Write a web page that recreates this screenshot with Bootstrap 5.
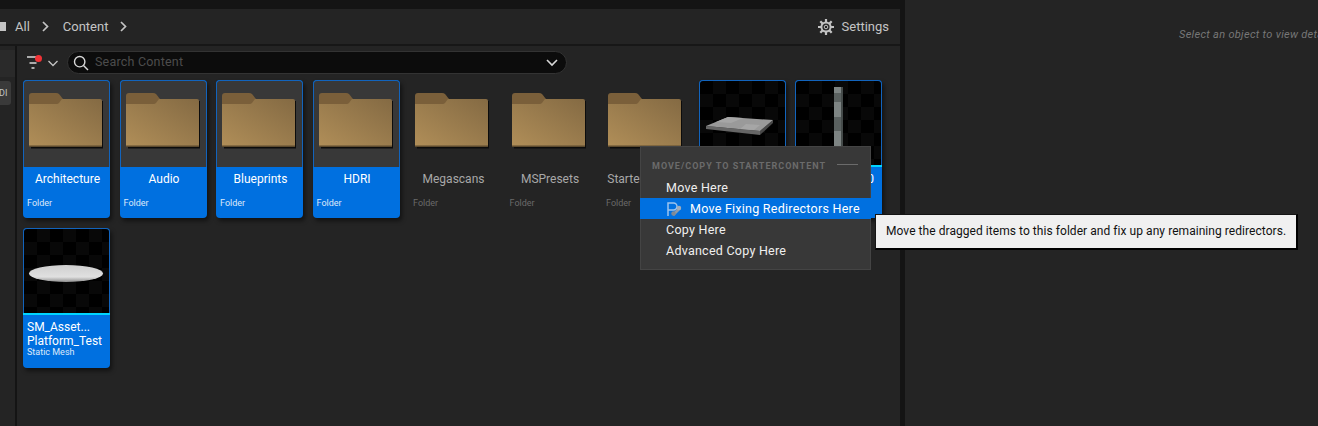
<!DOCTYPE html>
<html lang="en">
<head>
    <meta charset="UTF-8">
    <title>Content Browser</title>
    <link href="https://cdn.jsdelivr.net/npm/bootstrap@5.3.0/dist/css/bootstrap.min.css" rel="stylesheet">
    <style>
        html, body { height: 100%; }
        body {
            background-color: #141414;
            font-family: Roboto, "Liberation Sans", sans-serif;
            overflow: hidden;
            position: relative;
        }
        .browser-panel { width: 900px; height: 426px; padding-top: 9px; }
        .details-panel {
            width: 413px;
            height: 426px;
            margin-left: 5px;
            background-color: #242424;
            padding: 27px 0 0 274px;
            font-size: 11px;
            font-style: italic;
            letter-spacing: .3px;
            color: #777;
            white-space: nowrap;
            overflow: hidden;
        }
        .crumb-bar {
            height: 35px;
            background-color: #242424;
            color: #c4c4c4;
            font-size: 13px;
        }
        .crumb-stub { width: 6px; height: 9px; background-color: #c4c4c4; margin-right: 9px; }
        .crumb-sep { margin: 0 13px 0 12px; }
        .crumb-word { padding-left: 1px; }
        .settings-btn { padding-right: 11px; }
        .body-row { height: 382px; border-top: 2px solid #171717; }
        .side-strip { width: 15px; background-color: #242424; overflow: hidden; }
        .side-top { height: 27px; margin-top: 4px; background-color: #2a2a2a; }
        .side-chip {
            margin-top: 4px;
            width: 11px;
            height: 24px;
            border-radius: 0 3px 3px 0;
            background-color: #3a3a3a;
            color: #c4c4c4;
            font-size: 9px;
            line-height: 24px;
            text-indent: -1px;
            overflow: hidden;
        }
        .main-pane { width: 883px; margin-left: 2px; background-color: #242424; }
        .filter-row { height: 34px; padding: 5px 0 0 9px; }
        .filter-btn { width: 41px; position: relative; }
        .filter-icon { margin: 5px 0 0 1px; }
        .filter-caret { margin: 9px 0 0 9px; }
        .filter-dot {
            position: absolute;
            left: 9px;
            top: 4px;
            width: 7px;
            height: 7px;
            border-radius: 50%;
            background-color: #f03236;
        }
        .search-pill {
            width: 500px;
            height: 23px;
            background-color: #0c0c0c;
            border: 1px solid #333;
            border-radius: 12px;
            padding: 0 8px 0 5px;
        }
        .search-field {
            background: transparent;
            border: 0;
            outline: 0;
            padding: 0;
            margin-left: 6px;
            width: 440px;
            font-size: 12.5px;
            letter-spacing: .2px;
            color: #ccc;
        }
        .search-field::placeholder { color: #4c4c4c; opacity: 1; }
        .tile-grid {
            display: grid;
            grid-template-columns: repeat(9, 87px);
            gap: 10px 9.5px;
            padding-left: 6px;
        }
        .asset-tile {
            height: 138px;
            border-radius: 4px;
            color: #a8a8a8;
            overflow: hidden;
        }
        .asset-tile.tall-tile { height: 140px; }
        .asset-tile.is-selected {
            background-color: #0070e0;
            color: #fff;
            box-shadow: 2px 3px 4px rgba(0, 0, 0, .5);
        }
        .tile-thumb {
            height: 87px;
            background-color: #383838;
            border: 1px solid #1264bd;
            border-bottom: 0;
            border-radius: 4px 4px 0 0;
            padding: 12px 0 0 5px;
        }
        .asset-tile:not(.is-selected) .tile-thumb { background-color: transparent; border-color: transparent; }
        .tile-thumb.mesh-thumb {
            height: 85px;
            padding: 0;
            background-color: #000;
            background-image: conic-gradient(#080808 25%, #000 0 50%, #080808 0 75%, #000 0);
            background-size: 26px 26px;
        }
        .type-bar { height: 2px; background-color: #00d5ff; }
        .tile-name {
            font-size: 12px;
            line-height: 14px;
            text-align: center;
            padding: 5px 0 0 2px;
            height: 24px;
            white-space: nowrap;
        }
        .tile-type { font-size: 9px; line-height: 11px; padding: 7px 0 0 4px; opacity: .85; }
        .tile-type.dim { color: #777; }
        .tile-name.name-left { text-align: left; padding: 5px 0 0 4px; height: auto; }
        .tile-type.type-tight { padding-top: 0; margin-top: -1px; }
        .context-menu {
            position: absolute;
            left: 640px;
            top: 146px;
            width: 231px;
            height: 124px;
            background-color: #383838;
            border: 1px solid #444;
            color: #efefef;
            font-size: 12.5px;
            letter-spacing: .25px;
        }
        .menu-head {
            height: 30px;
            padding: 13px 12px 0 11px;
            font-size: 9px;
            line-height: 12px;
            font-weight: 700;
            letter-spacing: 1px;
            color: #6b6b6b;
            text-transform: uppercase;
        }
        .menu-rule { width: 21px; height: 1px; background-color: #6b6b6b; }
        .menu-row { height: 21px; line-height: 21px; padding-left: 25px; }
        .menu-row.is-hot { background-color: #0070e0; color: #fff; margin: 0 -1px; padding-left: 26px; }
        .hot-icon { margin-right: 7px; }
        .hint-box {
            position: absolute;
            left: 875px;
            top: 214px;
            width: 423px;
            height: 36px;
            background-color: #f0f0f0;
            border: 1px solid #141414;
            border-right: 2px solid #000;
            border-bottom: 2px solid #000;
            color: #111;
            font-size: 12px;
            letter-spacing: .055px;
            line-height: 33px;
            padding-left: 10px;
            white-space: nowrap;
        }
    </style>
</head>
<body>
    <div class="d-flex">
        <div class="browser-panel">
            <div class="crumb-bar d-flex align-items-center">
                <span class="crumb-stub"></span>
                <span>All</span>
                <svg class="crumb-sep" width="7" height="11" viewBox="0 0 7 11" fill="none" stroke="#c4c4c4" stroke-width="1.7"><path d="M1 1l4.500 4.500L1 10"/></svg>
                <span class="crumb-word">Content</span>
                <svg class="crumb-sep" width="7" height="11" viewBox="0 0 7 11" fill="none" stroke="#c4c4c4" stroke-width="1.7"><path d="M1 1l4.500 4.500L1 10"/></svg>
                <div class="ms-auto d-flex align-items-center gap-2 settings-btn">
                    <svg width="16" height="16" viewBox="0 0 16 16" fill="none" stroke="#c4c4c4">
                        <circle cx="8" cy="8" r="4.600" stroke-width="2"/>
                        <circle cx="8" cy="8" r="1.800" stroke-width="1"/>
                        <path stroke-width="2.200" d="M8 0v3M8 13v3M0 8h3M13 8h3M2.300 2.300l2.100 2.100M11.600 11.600l2.100 2.100M2.300 13.700l2.100-2.100M11.600 4.400l2.100-2.100"/>
                    </svg>
                    <span>Settings</span>
                </div>
            </div>
            <div class="body-row d-flex">
                <div class="side-strip">
                    <div class="side-top"></div>
                    <div class="side-chip">DI</div>
                </div>
                <div class="main-pane">
                    <div class="filter-row d-flex">
                        <div class="filter-btn d-flex align-items-start">
                            <svg class="filter-icon" width="12" height="14" viewBox="0 0 12 14" stroke="#d8d8d8" stroke-width="1.500"><path d="M0 1h12M2.500 7h7M4.500 12h3"/></svg>
                            <svg class="filter-caret" width="10" height="7" viewBox="0 0 10 7" fill="none" stroke="#c4c4c4" stroke-width="1.300"><path d="M.5 1l4.500 4.500L9.500 1"/></svg>
                            <span class="filter-dot"></span>
                        </div>
                        <div class="search-pill d-flex align-items-center">
                            <svg width="16" height="16" viewBox="0 0 16 16" fill="none" stroke="#d8d8d8" stroke-width="1.400"><circle cx="6.700" cy="6.700" r="5.200"/><path d="M10.500 10.500L15 15"/></svg>
                            <input class="search-field" type="text" placeholder="Search Content">
                            <svg class="ms-auto" width="12" height="8" viewBox="0 0 12 8" fill="none" stroke="#d8d8d8" stroke-width="1.600"><path d="M1 1l5 5 5-5"/></svg>
                        </div>
                    </div>
                    <div class="tile-grid" id="tiles"></div>
                </div>
            </div>
        </div>
        <div class="details-panel">Select an object to view details.</div>
    </div>

    <div class="context-menu">
        <div class="menu-head d-flex align-items-start justify-content-between">
            <span>Move/Copy to StarterContent</span>
            <span class="menu-rule mt-1"></span>
        </div>
        <div class="menu-row">Move Here</div>
        <div class="menu-row is-hot d-flex align-items-center">
            <svg class="hot-icon" width="17" height="16" viewBox="0 0 17 16">
                <path d="M2 15V2h5.500a3.500 3.500 0 0 1 0 7H2" fill="none" stroke="#9cc4ee" stroke-width="1.500"/>
                <path d="M6 13l7-7 2 2-7 7z" fill="#8e9aa8"/>
                <circle cx="7.500" cy="12.500" r="2.200" fill="#7f8a96"/>
                <circle cx="13" cy="7" r="2.200" fill="#a3adb8"/>
            </svg>
            <span>Move Fixing Redirectors Here</span>
        </div>
        <div class="menu-row">Copy Here</div>
        <div class="menu-row">Advanced Copy Here</div>
    </div>
    <div class="hint-box">Move the dragged items to this folder and fix up any remaining redirectors.</div>

    <script>
        const assets = [
            { name: "Architecture", kind: "folder", selected: true },
            { name: "Audio", kind: "folder", selected: true },
            { name: "Blueprints", kind: "folder", selected: true },
            { name: "HDRI", kind: "folder", selected: true },
            { name: "Megascans", kind: "folder" },
            { name: "MSPresets", kind: "folder" },
            { name: "StarterContent", kind: "folder" },
            { name: "SM_Plane_00", kind: "plate", selected: true },
            { name: "SM_Pillar_00", kind: "column", selected: true },
            { name: "SM_Asset...", name2: "Platform_Test", kind: "disc", selected: true }
        ];

        const folderIcon = (id) => `
            <svg width="75" height="56" viewBox="0 0 75 56">
                <defs><linearGradient id="${id}" x1="0" y1="1" x2="1" y2="0">
                    <stop offset="0" stop-color="#b08e58"/><stop offset="1" stop-color="#846a43"/>
                </linearGradient></defs>
                <path d="M2 8h72v47.500H2z" fill="#0c0c0c"/>
                <path d="M0 3q0-3 3-3h24q2 0 3 1l4 5v6H0z" fill="#7a5f3a"/>
                <path d="M0 11h28q1 0 2-1l3-4h38q2 0 2 2v45H0z" fill="url(#${id})"/>
                <path d="M0 52.500h73v1.500H0z" fill="#5c4a2e"/>
            </svg>`;

        const meshArt = {
            plate: `<svg width="85" height="85" viewBox="0 0 85 85">
                <path d="M6 45v3l54 6v-4z" fill="#666"/>
                <path d="M60 50v4l13-12v-3z" fill="#484848"/>
                <path d="M6 45L28 36l45 3-13 11z" fill="#9a9a9a"/>
                <path d="M28 36l15 1-12 5-15-1zM46 43l14 1-6 5-14-1z" fill="#a6a6a6"/>
            </svg>`,
            column: `<svg width="85" height="85" viewBox="0 0 85 85">
                <path d="M38 6h7v79h-7z" fill="#7d8483"/><path d="M45 6h2v79h-2z" fill="#454b4a"/>
                <path d="M38 12h7v9h-7zM38 36h7v14h-7z" fill="#5a6160"/>
            </svg>`,
            disc: `<svg width="85" height="85" viewBox="0 0 85 85">
                <defs><linearGradient id="discFill" x1="0" y1="0" x2="0" y2="1">
                    <stop offset="0" stop-color="#cfcfcf"/><stop offset=".7" stop-color="#e0e0e0"/><stop offset="1" stop-color="#8f8f8f"/>
                </linearGradient></defs>
                <ellipse cx="42" cy="44.500" rx="37" ry="8.500" fill="url(#discFill)"/>
            </svg>`
        };

        document.getElementById("tiles").innerHTML = assets.map((a, i) => {
            const cls = "asset-tile" + (a.selected ? " is-selected" : "") + (a.name2 ? " tall-tile" : "");
            if (a.kind === "folder") {
                return `<div class="${cls}">
                    <div class="tile-thumb">${folderIcon("fold" + i)}</div>
                    <div class="tile-name">${a.name}</div>
                    <div class="tile-type ${a.selected ? "" : "dim"}">Folder</div>
                </div>`;
            }
            const label = a.name2
                ? `<div class="tile-name name-left">${a.name}<br>${a.name2}</div><div class="tile-type type-tight">Static Mesh</div>`
                : `<div class="tile-name">${a.name}</div><div class="tile-type">Static Mesh</div>`;
            return `<div class="${cls}">
                <div class="tile-thumb mesh-thumb">${meshArt[a.kind]}</div>
                <div class="type-bar"></div>
                ${label}
            </div>`;
        }).join("");
    </script>
    <script src="https://cdn.jsdelivr.net/npm/bootstrap@5.3.0/dist/js/bootstrap.bundle.min.js"></script>
</body>
</html>
